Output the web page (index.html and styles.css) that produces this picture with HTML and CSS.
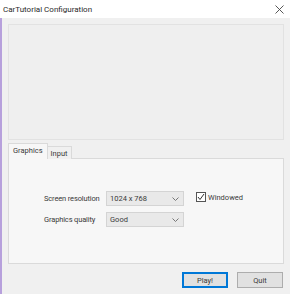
FILE: index.html
```html
<!DOCTYPE html>
<html lang="en">
<head>
    <meta charset="UTF-8">
    <title>CarTutorial Configuration</title>
    <link rel="stylesheet" href="styles.css">
</head>
<body>

<div class="window">
    <div class="titlebar">
        <span class="title">CarTutorial Configuration</span>
        <span class="close">
            <svg width="9" height="9" viewBox="0 0 9 9"><path d="M0.5 0.5L8.5 8.5M8.5 0.5L0.5 8.5" stroke="#444" stroke-width="0.9"/></svg>
        </span>
    </div>

    <div class="client">
        <div class="banner"></div>

        <div class="tabs">
            <div class="tab active">Graphics</div>
            <div class="tab">Input</div>
        </div>
        <div class="panel">
            <div class="form">
                <div class="row">
                    <span class="label">Screen resolution</span>
                    <div class="combo">
                        <span>1024 x 768</span>
                        <svg width="7" height="4" viewBox="0 0 7 4"><path d="M0.5 0.5L3.5 3.5L6.5 0.5" fill="none" stroke="#777"/></svg>
                    </div>
                    <label class="check">
                        <span class="box">
                            <svg width="8" height="8" viewBox="0 0 8 8"><path d="M1 4L3 6.5L7 1" fill="none" stroke="#333" stroke-width="1"/></svg>
                        </span>
                        Windowed
                    </label>
                </div>
                <div class="row">
                    <span class="label">Graphics quality</span>
                    <div class="combo">
                        <span>Good</span>
                        <svg width="7" height="4" viewBox="0 0 7 4"><path d="M0.5 0.5L3.5 3.5L6.5 0.5" fill="none" stroke="#777"/></svg>
                    </div>
                </div>
            </div>
        </div>

        <div class="buttons">
            <button class="btn default">Play!</button>
            <button class="btn">Quit</button>
        </div>
    </div>
</div>

</body>
</html>
```
FILE: styles.css
```css
body {
    margin: 0;
    font-family: Roboto, "Noto Sans", sans-serif;
    font-size: 7.5px;
    color: #3a3a3a;
    background: #f0f0f0;
}
.window {
    width: 290px;
    height: 294px;
    display: flex;
    flex-direction: column;
}
.titlebar {
    height: 18px;
    background: #ffffff;
    display: flex;
    align-items: center;
    justify-content: space-between;
    padding: 0 4px 0 3px;
}
.title {
    font-size: 8px;
    color: #2a2a2a;
}
.close {
    display: flex;
    width: 9px;
    height: 9px;
    margin-right: 2px;
}
.client {
    flex: 1;
    background: #f0f0f0;
    border-left: 2px solid #b7a0dc;
    padding: 6px 6px 0 6px;
    display: flex;
    flex-direction: column;
}
.banner {
    height: 114px;
    border: 1px solid #e2e2e2;
    background: #efefef;
}
.tabs {
    display: flex;
    align-items: flex-end;
    margin-top: 4px;
    height: 15px;
    position: relative;
    z-index: 1;
}
.tab {
    height: 12px;
    padding: 0 3px;
    border: 1px solid #dadada;
    border-bottom: none;
    background: #f0f0f0;
    line-height: 13px;
}
.tab.active {
    height: 15px;
    line-height: 13px;
    background: #f7f7f7;
    padding: 0 4px;
    margin-right: -1px;
}
.panel {
    height: 104px;
    border: 1px solid #dadada;
    background: #f7f7f7;
    margin-top: -1px;
}
.form {
    padding: 32px 0 0 35px;
    display: flex;
    flex-direction: column;
    gap: 6px;
}
.row {
    display: flex;
    align-items: center;
}
.label {
    width: 62px;
    white-space: nowrap;
    letter-spacing: -0.15px;
}
.combo {
    width: 78px;
    height: 15px;
    border: 1px solid #d4d4d4;
    background: #e9e9e9;
    display: flex;
    align-items: center;
    justify-content: space-between;
    padding: 0 4px 0 3px;
    box-sizing: border-box;
}
.check {
    display: flex;
    align-items: center;
    gap: 2px;
    margin-left: 12px;
    margin-top: -3px;
}
.box {
    width: 8px;
    height: 8px;
    border: 1px solid #555;
    background: #fff;
    display: flex;
}
.buttons {
    display: flex;
    justify-content: flex-end;
    gap: 9px;
    padding: 8px 1px 0 0;
}
.btn {
    width: 46px;
    height: 16px;
    font-family: inherit;
    font-size: 7.5px;
    padding: 0;
    border: 1px solid #adadad;
    background: #e1e1e1;
    color: #3a3a3a;
}
.btn.default {
    border: 2px solid #0078d7;
}
```
